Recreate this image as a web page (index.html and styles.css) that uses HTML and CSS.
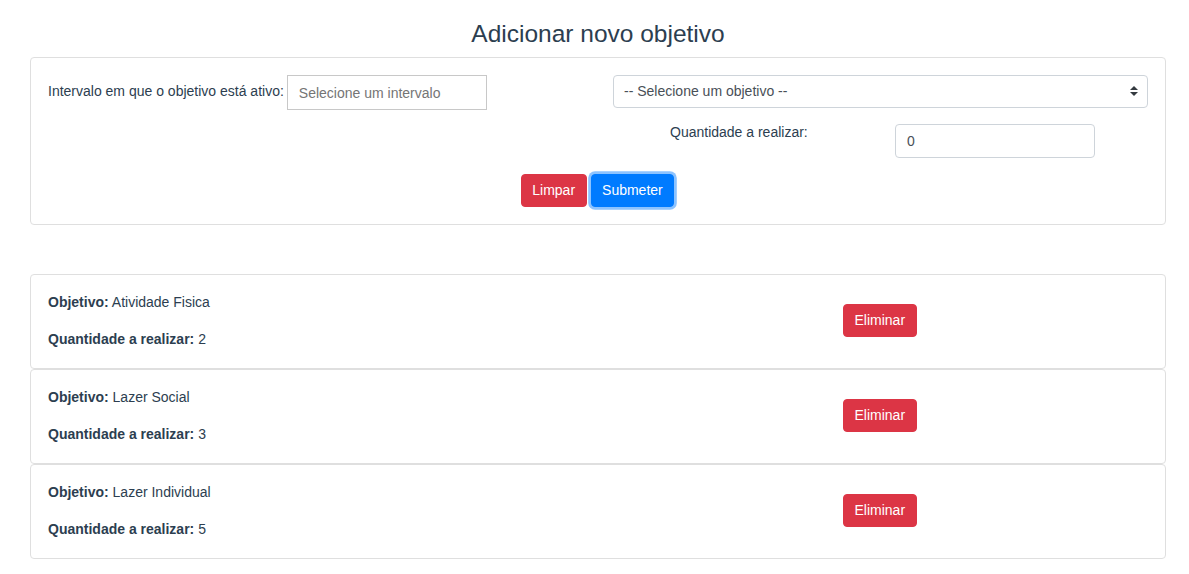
FILE: index.html
```html
<!DOCTYPE html>
<html lang="pt">
<head>
<meta charset="utf-8">
<title>Adicionar novo objetivo</title>
<link rel="stylesheet" href="styles.css">
</head>
<body>
<div class="page">
  <h3 class="title">Adicionar novo objetivo</h3>
  <div class="card form-card">
    <div class="form-grid">
      <div class="interval-row">
        <label class="label" for="intervalo">Intervalo em que o objetivo está ativo:</label>
        <input id="intervalo" class="date-input" type="text" placeholder="Selecione um intervalo">
      </div>
      <div class="right-col">
        <div class="select-wrap">
          <select class="custom-select">
            <option>-- Selecione um objetivo --</option>
          </select>
          <svg class="select-arrows" width="8" height="10" viewBox="0 0 4 5" aria-hidden="true"><path fill="#343a40" d="M2 0L0 2h4zm0 5L0 3h4z"/></svg>
        </div>
        <div class="qty-row">
          <label class="label qty-label" for="qtd">Quantidade a realizar:</label>
          <input id="qtd" class="form-control" type="number" value="0">
        </div>
      </div>
    </div>
    <div class="actions">
      <button class="btn btn-danger">Limpar</button>
      <button class="btn btn-primary focused">Submeter</button>
    </div>
  </div>

  <div class="list">
    <div class="card item-card">
      <div class="item-text">
        <p><b>Objetivo:</b> Atividade Fisica</p>
        <p><b>Quantidade a realizar:</b> 2</p>
      </div>
      <div class="item-action"><button class="btn btn-danger">Eliminar</button></div>
    </div>
    <div class="card item-card">
      <div class="item-text">
        <p><b>Objetivo:</b> Lazer Social</p>
        <p><b>Quantidade a realizar:</b> 3</p>
      </div>
      <div class="item-action"><button class="btn btn-danger">Eliminar</button></div>
    </div>
    <div class="card item-card">
      <div class="item-text">
        <p><b>Objetivo:</b> Lazer Individual</p>
        <p><b>Quantidade a realizar:</b> 5</p>
      </div>
      <div class="item-action"><button class="btn btn-danger">Eliminar</button></div>
    </div>
  </div>
</div>
</body>
</html>
```

FILE: styles.css
```css
* { box-sizing: border-box; }
html, body { margin: 0; padding: 0; background: #fff; }
body {
  font-family: "Liberation Sans", Arial, Helvetica, sans-serif;
  font-size: 14px;
  line-height: 1.5;
  color: #2c3e50;
}
.page { padding: 0 23px 0 30px; }
.title {
  font-size: 24.5px;
  font-weight: 400;
  line-height: 1.2;
  text-align: center;
  margin: 19px 0 9px;
}
.card {
  border: 1px solid #dfdfdf;
  border-radius: 4px;
  background: #fff;
}
.form-card { padding: 17px 17px 17px; }
.form-grid {
  display: grid;
  grid-template-columns: 534px 1fr;
  column-gap: 31px;
}
.interval-row {
  display: flex;
  align-items: flex-start;
  gap: 3px;
}
.interval-row .label { line-height: 21px; margin-top: 6px; }
.date-input {
  width: 200px;
  height: 35px;
  border: 1px solid #c8c8c8;
  border-radius: 0;
  padding: 0 11px;
  font: inherit;
  font-size: 14px;
  color: #495057;
  outline: none;
}
.date-input::placeholder { color: #757575; }
.select-wrap { position: relative; }
.custom-select {
  display: block;
  width: 100%;
  height: 33px;
  border: 1px solid #ced4da;
  border-radius: 4px;
  padding: 0 28px 0 10px;
  font: inherit;
  font-size: 14px;
  color: #495057;
  background: #fff;
  appearance: none;
  -webkit-appearance: none;
  outline: none;
}
.select-arrows {
  position: absolute;
  right: 10px;
  top: 11px;
  pointer-events: none;
}
.qty-row {
  display: grid;
  grid-template-columns: 267px 1fr;
  margin-top: 16px;
}
.qty-label { padding-left: 57px; line-height: 21px; margin-top: -2px; }
.form-control {
  width: 200px;
  height: 34px;
  margin-left: 15px;
  border: 1px solid #ced4da;
  border-radius: 4px;
  padding: 0 11px;
  font: inherit;
  font-size: 14px;
  color: #495057;
  background: #fff;
  outline: none;
  -moz-appearance: textfield;
}
.form-control::-webkit-outer-spin-button,
.form-control::-webkit-inner-spin-button { -webkit-appearance: none; margin: 0; }
.actions {
  display: flex;
  justify-content: center;
  gap: 4px;
  margin-top: 16px;
  padding-right: 1px;
}
.btn {
  font: inherit;
  font-size: 14px;
  line-height: 21px;
  padding: 5px 10.5px;
  border: 1px solid transparent;
  border-radius: 4px;
  color: #fff;
  cursor: pointer;
}
.btn-danger { background: #dc3545; border-color: #dc3545; }
.btn-primary { background: #007bff; border-color: #007bff; }
.btn-primary.focused { box-shadow: 0 0 0 2.8px rgba(0, 123, 255, 0.45); }
.list { margin-top: 49px; }
.item-card {
  display: grid;
  grid-template-columns: 795px auto;
  height: 95px;
  padding: 17px 17px 0;
}
.item-text p { margin: 0 0 16px; line-height: 21px; }
.item-action { padding-top: 12px; }
```
